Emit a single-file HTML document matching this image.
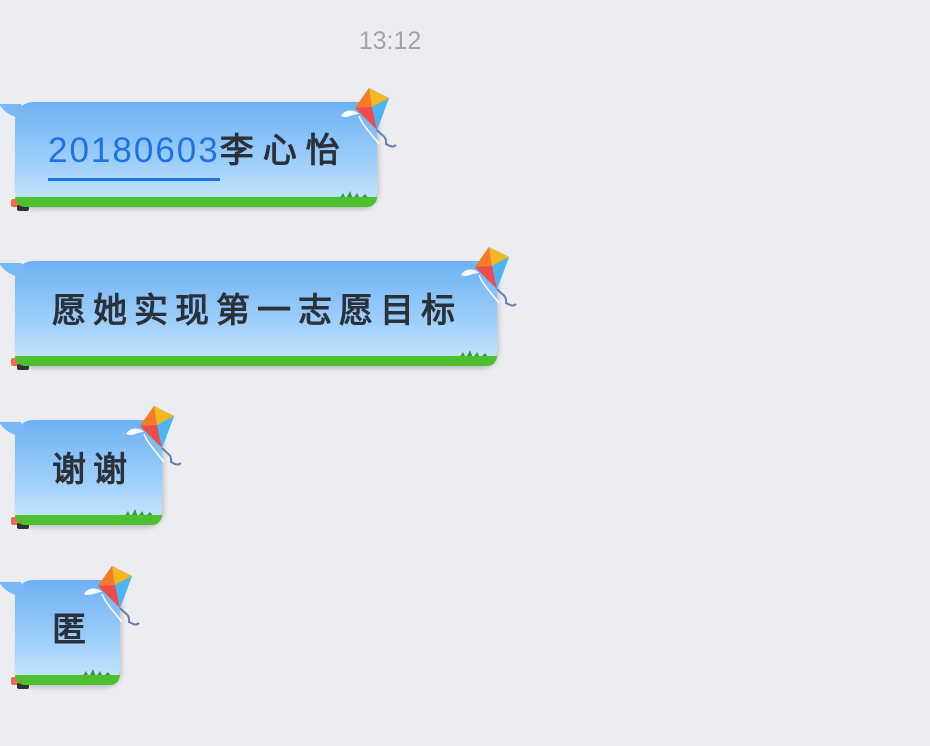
<!DOCTYPE html>
<html><head><meta charset="utf-8"><style>
body{margin:0;width:930px;height:746px;background:#ebedf0;position:relative;overflow:hidden;font-family:"Liberation Sans","Noto Sans CJK SC",sans-serif}
.t{position:absolute;top:27px;left:0;width:780px;text-align:center;color:#a3a4a7;font-size:25px}
.b{position:absolute;left:15px;height:105px;border-radius:18px;background:linear-gradient(#6cb1f4,#a9d5fb 70%,#bfe2fc 88%);overflow:visible;box-shadow:2px 3px 5px rgba(0,0,0,.18)}
.b::after{content:"";position:absolute;left:0;right:0;bottom:0;height:10px;background:#4cc02f;border-radius:0 0 18px 18px}
.b::before{content:"";position:absolute;left:-12px;top:2px;width:22px;height:14px;background:#7ab8f5;border-radius:0 0 0 20px;transform:skewX(30deg)}
.x{position:absolute;top:30px;left:37px;font-size:34px;line-height:40px;color:#2a313b;font-weight:bold;letter-spacing:7px;white-space:nowrap;font-family:"Liberation Sans","WenQuanYi Zen Hei",sans-serif}
.k{position:absolute;top:-16px;width:60px;height:70px}
.g{position:absolute;bottom:8px;width:30px;height:8px}
.r{position:absolute;left:-6px;bottom:-6px;width:22px;height:16px}
</style></head><body>
<div class="t">13:12</div>
<svg width="0" height="0" style="position:absolute"><defs>
<g id="kite"><path d="M2 30c5-8 14-6 18-2c-7 0-12 5-18 2z" fill="#fff"/><polygon points="30,2 50,12 38,44 16,22" fill="#3ea8f0"/><polygon points="30,2 16,22 33,21" fill="#f57b26"/><polygon points="30,2 50,12 33,21" fill="#f5b720"/><polygon points="16,22 38,44 33,21" fill="#ef4b4b"/><polygon points="33,21 50,12 38,44" fill="#4bb5f5"/><path d="M38 44c5 6 10 6 9 14c4 2 7 4 10 1" stroke="#6a7ab0" stroke-width="2" fill="none"/><path d="M20 30c4 10 14 20 20 28" stroke="#fff" stroke-width="1.5" fill="none"/></g>
<g id="gr"><path d="M0 8l4-6 3 6 4-8 3 8 4-6 3 6 5-5 4 5z" fill="#3a9a3a"/></g>
<g id="rl"><rect x="2" y="2" width="14" height="8" rx="2" fill="#f26a4f"/><rect x="8" y="8" width="12" height="6" rx="2" fill="#333"/></g>
</defs></svg>

<div class="b" style="top:102px;width:362px"><div class="x" style="top:29px;left:33px;letter-spacing:9px"><span style="color:#1e72e6;border-bottom:3px solid #1e72e6;padding-bottom:8px;letter-spacing:2px;font-weight:normal;font-size:35px">20180603</span>李心怡</div>
<svg class="k" style="right:-22px"><use href="#kite"/></svg><svg class="g" style="right:8px"><use href="#gr"/></svg><svg class="r"><use href="#rl"/></svg></div>

<div class="b" style="top:261px;width:482px"><div class="x" style="letter-spacing:7px">愿她实现第一志愿目标</div>
<svg class="k" style="right:-22px"><use href="#kite"/></svg><svg class="g" style="right:8px"><use href="#gr"/></svg><svg class="r"><use href="#rl"/></svg></div>

<div class="b" style="top:420px;width:147px"><div class="x">谢谢</div>
<svg class="k" style="right:-22px"><use href="#kite"/></svg><svg class="g" style="right:8px"><use href="#gr"/></svg><svg class="r"><use href="#rl"/></svg></div>

<div class="b" style="top:580px;width:105px"><div class="x">匿</div>
<svg class="k" style="right:-22px"><use href="#kite"/></svg><svg class="g" style="right:8px"><use href="#gr"/></svg><svg class="r"><use href="#rl"/></svg></div>
</body></html>
